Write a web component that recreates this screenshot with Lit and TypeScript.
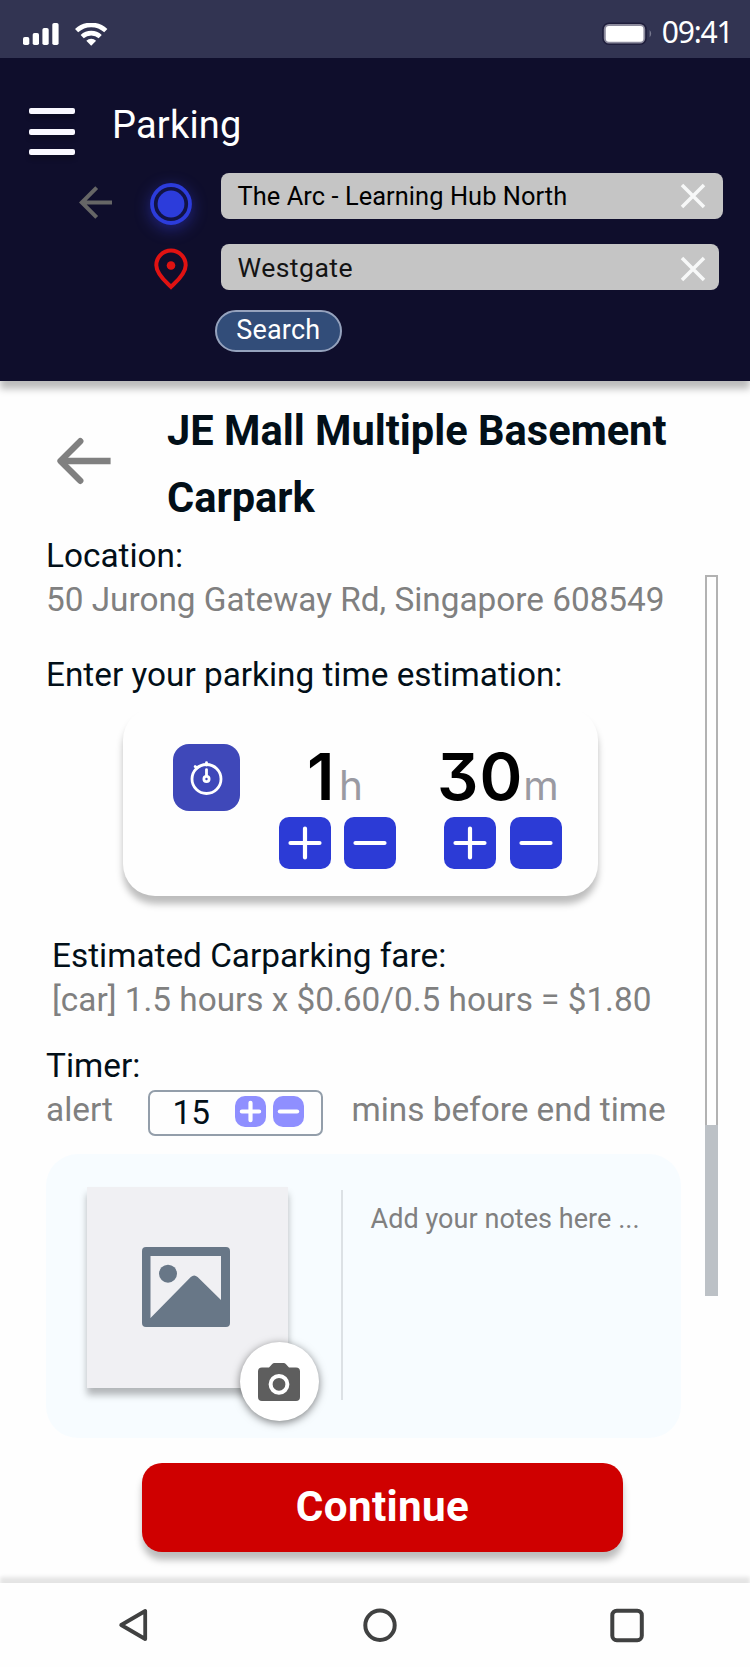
import { LitElement, html, css } from "lit";
import { customElement, property, state } from "lit/decorators.js";

@customElement("step-button")
class StepButton extends LitElement {
  @property() kind: "plus" | "minus" = "plus";

  static styles = css`
    :host { display: block; width: 52px; height: 52px; }
    .btn { display: block; width: 100%; height: 100%; padding: 0; border: 0; background: var(--fill, #2c3bd6); border-radius: var(--radius, 10px); }
    svg { display: block; width: 100%; height: 100%; }
    .glyph { fill: none; stroke: #fff; stroke-width: var(--stroke, 4.2px); stroke-linecap: round; }
  `;

  render() {
    return html`<button class="btn" aria-label=${this.kind}>
      <svg viewBox="0 0 52 52"><path class="glyph" d=${this.kind === "plus" ? "M11.5 26h29M26 11.5v29" : "M11.5 26h29"}></path></svg>
    </button>`;
  }
}

@customElement("route-field")
class RouteField extends LitElement {
  @property() value = "";

  static styles = css`
    :host { display: block; }
    .field { display: flex; align-items: center; justify-content: space-between; height: 46px; box-sizing: border-box; background: #c5c5c5; border-radius: 8px; padding-left: 16.5px; }
    .value { font-size: var(--size, 25.4px); letter-spacing: var(--spacing, 0.07px); line-height: 46px; margin-top: var(--shift, 0px); white-space: nowrap; }
    .clear { width: 26px; height: 26px; margin-right: var(--clear-gap, 17px); margin-top: var(--clear-shift, 0px); }
  `;

  render() {
    return html`<div class="field">
      <span class="value">${this.value}</span>
      <svg class="clear" viewBox="0 0 26 26" stroke="#f7f8f8" stroke-width="3.5"><path d="M2 2l22 22M24 2L2 24"></path></svg>
    </div>`;
  }
}

@customElement("app-root")
class AppRoot extends LitElement {
  @state() hours = 1;
  @state() minutes = 30;
  @state() alert = 15;

  static styles = css`
    :host { display: block; width: 750px; height: 1667px; overflow: hidden; background: #fefefe; font-family: Roboto, sans-serif; color: #020f18; }
    .screen { display: flex; flex-direction: column; height: 1667px; }
    svg { display: block; flex: none; }

    .status { display: flex; justify-content: space-between; height: 58px; background: #323452; color: #fff; }
    .status-left { display: flex; gap: 16px; padding: 23px 0 0 23px; }
    .status-right { display: flex; padding-right: 17.5px; }
    .battery { margin: 22px 8.5px 0 0; }
    .clock { font: 400 30px/58px "Noto Sans", sans-serif; letter-spacing: -1.2px; margin-top: 3px; }

    .header { position: relative; display: flex; flex-direction: column; height: 323px; box-sizing: border-box; padding-top: 46px; background: #0f0e2c; box-shadow: 0 8px 7px rgba(0, 0, 0, 0.26); }
    .topline { display: flex; height: 69px; padding-left: 29px; }
    .menu { display: flex; flex-direction: column; gap: 14.5px; width: 46px; margin-top: 4px; }
    .bar { height: 6px; border-radius: 2px; background: #f9f8ff; box-shadow: 0 4px 4px rgba(0, 0, 0, 0.25); }
    .screen-name { margin: 1px 0 0 37px; color: #fff; font-size: 38px; line-height: 40px; letter-spacing: 0.2px; }
    .route { display: flex; height: 46px; }
    .route + .route { margin-top: 24.5px; }
    .route-back { margin: 12.5px 0 0 79px; }
    .origin { margin: 10px 0 0 38px; filter: drop-shadow(0 4px 8px rgba(60, 70, 255, 0.4)); }
    .dest { margin: 4px 0 0 153px; }
    .from { width: 502px; margin-left: 29px; color: #000; --clear-shift: -1px; --shift: -1px; }
    .to { width: 498px; margin-left: 32px; color: #141414; --size: 26.6px; --spacing: 0.45px; --clear-gap: 13px; --clear-shift: 4px; --shift: 2px; }
    .search { width: 127.5px; height: 42px; margin: 20.5px 0 0 214.5px; box-sizing: border-box; padding: 0 0 2px; border: 2px solid #95a2bd; border-radius: 21px; background: #324d79; color: #fff; font: 400 27px/35px Roboto, sans-serif; letter-spacing: 0.2px; }

    .body { display: flex; flex: none; height: 1202px; }
    .content { display: flex; flex-direction: column; width: 681px; padding-top: 17.5px; }
    .title { display: flex; height: 135.4px; }
    .title-back { margin: 38px 0 0 57px; }
    h1 { margin: -0.7px 0 0 56px; font-size: 41.6px; line-height: 66.8px; font-weight: 700; white-space: nowrap; }
    .pair { margin-left: 46px; font-size: 33.33px; line-height: 44px; white-space: nowrap; }
    .grey { color: #808080; }
    .question { margin-top: 31.2px; height: 43.3px; }
    .fare { margin: 37.4px 0 0 52px; }
    .timer { margin-top: 22px; }

    .duration { display: flex; width: 475px; height: 188px; margin: 12px 0 0 123px; border-radius: 32px; box-shadow: 0 8px 7px rgba(0, 0, 0, 0.26); }
    .tile { display: flex; align-items: center; justify-content: center; width: 67px; height: 67px; margin: 36px 0 0 50px; border-radius: 16px; background: #3f48b9; }
    .unit { display: flex; flex-direction: column; }
    .hours { margin-left: 39px; width: 117px; }
    .minutes { margin-left: 47.5px; width: 118.5px; }
    .amount { display: flex; align-items: baseline; height: 109px; font: 600 65px/138px Inter, sans-serif; font-feature-settings: "cv09"; white-space: nowrap; color: #000; }
    .hours .amount { padding-left: 28px; }
    .minutes .amount { margin-left: -6.5px; letter-spacing: 1px; }
    .suffix { margin-left: 0; font-size: 40.5px; font-weight: 400; color: #9a9aa2; letter-spacing: 0; }
    .hours .suffix { margin-left: 4.5px; }
    .steps { display: flex; justify-content: space-between; }

    .alert { display: flex; height: 66.5px; font-size: 33.33px; line-height: 44px; color: #808080; white-space: nowrap; }
    .alert-label { width: 102px; margin-left: 46px; box-sizing: border-box; }
    .picker { display: flex; align-items: center; width: 175px; height: 46px; box-sizing: border-box; margin-top: 2.2px; padding-left: 22.5px; border: 2px solid #939eaa; border-radius: 7px; }
    .picker-value { width: 62.5px; color: #020f18; }
    .small { width: 31px; height: 31px; margin-top: -2px; --fill: #8f8fff; --radius: 10px; --stroke: 7px; }
    .small + .small { margin-left: 6.5px; }
    .alert-tail { margin-left: 28.5px; }

    .notes { display: flex; width: 635px; height: 284px; margin-left: 46px; border-radius: 32px; background: #f7fcff; }
    .photo { position: relative; display: flex; align-items: center; justify-content: center; width: 201px; height: 201px; margin: 33px 0 0 41px; background: #f0f0f3; box-shadow: 0 7px 7px rgba(0, 0, 0, 0.28); }
    .image { margin: 0 2.5px 2px 0; }
    .camera { position: absolute; left: 152.5px; top: 155px; display: flex; align-items: center; justify-content: center; width: 79px; height: 79px; border-radius: 50%; background: #fff; box-shadow: 0 2px 8px rgba(0, 0, 0, 0.5); }
    .divider { width: 2px; height: 210px; margin: 36px 0 0 53px; background: #dce1e5; }
    .placeholder { margin: 45px 0 0 27.5px; font-size: 27px; line-height: 40px; letter-spacing: 0.05px; color: #808080; white-space: nowrap; }

    .continue { width: 481px; height: 89px; margin: 25px 0 0 142px; border: 0; padding: 0 0 2px; border-radius: 20px; background: #cf0000; color: #fff; font: 700 42.2px/87px Roboto, sans-serif; letter-spacing: 0.35px; box-shadow: 0 8px 7px rgba(0, 0, 0, 0.26); }

    .track { width: 13px; height: 721px; box-sizing: border-box; margin: 194px 0 0 24px; border: 2px solid #b2b2b2; border-bottom: 0; display: flex; flex-direction: column; justify-content: flex-end; }
    .thumb { height: 171px; margin: 0 -2px; background: #bcc1c6; }

    .nav { position: relative; display: flex; align-items: flex-start; height: 84px; box-sizing: border-box; padding: 24px 0 0 117px; background: #fefefe; box-shadow: 0 -6px 4px rgba(0, 0, 0, 0.1); }
    .nav-home { margin-left: 212px; }
    .nav-recent { margin-left: 211.5px; }
  `;

  render() {
    return html`<div class="screen">
      <div class="status">
        <div class="status-left">
          <svg width="36" height="22" viewBox="0 0 36 22" fill="#fff">
            <rect x="0" y="14" width="6.3" height="8" rx="1.8"></rect><rect x="9.7" y="10" width="6.3" height="12" rx="1.8"></rect><rect x="19.4" y="5" width="6.3" height="17" rx="1.8"></rect><rect x="29.3" y="0" width="6.3" height="22" rx="1.8"></rect>
          </svg>
          <svg width="33" height="23" viewBox="0 0 33 23">
            <g fill="none" stroke="#fff" stroke-width="4.6"><path d="M1.6 7.7a21.3 21.3 0 0 1 29.2 0"></path><path d="M7.2 13.6a13.3 13.3 0 0 1 18 0"></path></g>
            <path d="M16.2 22.8l-4.9-5a7 7 0 0 1 9.8 0z" fill="#fff"></path>
          </svg>
        </div>
        <div class="status-right">
          <svg class="battery" width="51" height="24" viewBox="0 0 51 24">
            <rect x="1" y="1.2" width="43" height="21" rx="6" fill="#8c8b9d" stroke="#1f1e3c" stroke-width="1.6"></rect>
            <rect x="3.8" y="3.9" width="37.6" height="15.8" rx="3" fill="#fff"></rect>
            <path d="M47.6 8q3.2 3.7 0 7.4z" fill="#77788f"></path>
          </svg>
          <span class="clock">09:41</span>
        </div>
      </div>

      <div class="header">
        <div class="topline">
          <div class="menu"><div class="bar"></div><div class="bar"></div><div class="bar"></div></div>
          <div class="screen-name">Parking</div>
        </div>
        <div class="route">
          <svg class="route-back" width="33" height="33" viewBox="0 0 33 33" fill="none" stroke="#666" stroke-width="4"><path d="M17.7 1.6L2.8 16.5l14.9 14.9M3 16.5h30"></path></svg>
          <svg class="origin" width="42" height="42" viewBox="0 0 42 42"><circle cx="21" cy="21" r="19" fill="#111346" stroke="#2c3cdb" stroke-width="3.8"></circle><circle cx="21" cy="21" r="13.4" fill="#2c3cdb"></circle></svg>
          <route-field class="from" value="The Arc - Learning Hub North"></route-field>
        </div>
        <div class="route">
          <svg class="dest" width="36" height="44" viewBox="0 0 36 44"><path d="M18 38.8C14 34.8 3.3 26.5 3.3 17.2a14.7 14.7 0 0 1 29.4 0C32.7 26.5 22 34.8 18 38.8z" fill="none" stroke="#e01212" stroke-width="4"></path><circle cx="18" cy="17.5" r="4.3" fill="#e01212"></circle></svg>
          <route-field class="to" value="Westgate"></route-field>
        </div>
        <button class="search">Search</button>
      </div>

      <div class="body">
        <div class="content">
          <div class="title">
            <svg class="title-back" width="54" height="48" viewBox="0 0 54 48" fill="none" stroke="#808080" stroke-width="6.3" stroke-linecap="round"><path d="M23.3 4.2L3.5 24l19.8 19.8" stroke-linejoin="round"></path><path d="M5 24h48.6" stroke-linecap="butt"></path></svg>
            <h1>JE Mall Multiple Basement<br />Carpark</h1>
          </div>
          <div class="pair">Location:<div class="grey">50 Jurong Gateway Rd, Singapore 608549</div></div>
          <div class="pair question">Enter your parking time estimation:</div>

          <div class="duration">
            <div class="tile">
              <svg width="34" height="36" viewBox="0 0 34 36" fill="none" stroke="#fff" stroke-width="2.8" stroke-linecap="round"><circle cx="16.5" cy="19" r="14.5"></circle><path d="M16.5 2.6v2.5M5.2 6.6l2 1.4M16.5 9.6v6"></path><circle cx="16.5" cy="19" r="2.6"></circle></svg>
            </div>
            <div class="unit hours">
              <div class="amount">${this.hours}<span class="suffix">h</span></div>
              <div class="steps"><step-button kind="plus"></step-button><step-button kind="minus"></step-button></div>
            </div>
            <div class="unit minutes">
              <div class="amount">${this.minutes}<span class="suffix">m</span></div>
              <div class="steps"><step-button kind="plus"></step-button><step-button kind="minus"></step-button></div>
            </div>
          </div>

          <div class="pair fare">Estimated Carparking fare:<div class="grey">[car] 1.5 hours x $0.60/0.5 hours = $1.80</div></div>
          <div class="pair timer">Timer:</div>
          <div class="alert">
            <span class="alert-label">alert</span>
            <div class="picker">
              <span class="picker-value">${this.alert}</span>
              <step-button class="small" kind="plus"></step-button><step-button class="small" kind="minus"></step-button>
            </div>
            <span class="alert-tail">mins before end time</span>
          </div>

          <div class="notes">
            <div class="photo">
              <svg class="image" width="88" height="80" viewBox="0 0 88 80" fill="#687787"><path fill-rule="evenodd" d="M4 0h80a4 4 0 0 1 4 4v72a4 4 0 0 1-4 4H4a4 4 0 0 1-4-4V4a4 4 0 0 1 4-4zM8.5 9v62L48.8 30q3.4-3.2 6.8 0L79 53V9z"></path><circle cx="26" cy="26.7" r="9"></circle></svg>
              <div class="camera">
                <svg width="42" height="38" viewBox="0 0 42 38"><path d="M11 4.5L14 1.2Q15 0 16.5 0h9Q27 0 28 1.2L31 4.5h7a4 4 0 0 1 4 4V34a4 4 0 0 1-4 4H4a4 4 0 0 1-4-4V8.5a4 4 0 0 1 4-4z" fill="#5e5e5e"></path><circle cx="21" cy="21.3" r="8.4" fill="none" stroke="#fff" stroke-width="4"></circle></svg>
              </div>
            </div>
            <div class="divider"></div>
            <span class="placeholder">Add your notes here ...</span>
          </div>

          <button class="continue">Continue</button>
        </div>
        <div class="track"><div class="thumb"></div></div>
      </div>

      <div class="nav">
        <svg width="34" height="36" viewBox="0 0 34 36" fill="none" stroke="#404141" stroke-width="3.8" stroke-linejoin="round"><path d="M28.2 4v28L4.2 18z"></path></svg>
        <svg class="nav-home" width="34" height="36" viewBox="0 0 34 36" fill="none" stroke="#404141" stroke-width="4"><circle cx="17" cy="18.3" r="14.7"></circle></svg>
        <svg class="nav-recent" width="36" height="36" viewBox="0 0 36 36" fill="none" stroke="#404141" stroke-width="4"><rect x="3.3" y="3.7" width="29.5" height="29.5" rx="4.5"></rect></svg>
      </div>
    </div>`;
  }
}
